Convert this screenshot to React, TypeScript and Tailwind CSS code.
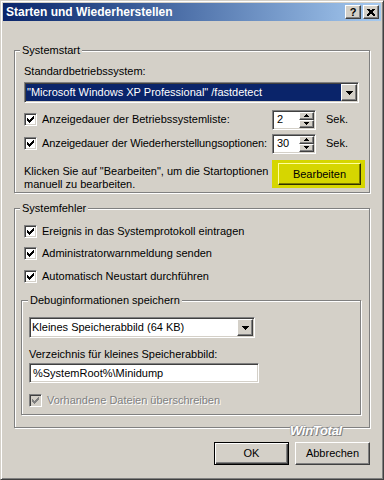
import type { ReactNode } from 'react'

const sunken =
  'border border-t-[#808080] border-l-[#808080] border-b-white border-r-white shadow-[inset_1px_1px_0_#404040,inset_-1px_-1px_0_#d4d0c8]'
const raised =
  'border border-t-white border-l-white border-b-[#404040] border-r-[#404040] shadow-[inset_-1px_-1px_0_#808080] bg-[#d4d0c8]'
const etched =
  'border border-[#808080] shadow-[inset_1px_1px_0_#fff,1px_1px_0_#fff]'

const Check = ({ color }: { color: string }) => (
  <svg width="7" height="7" viewBox="0 0 7 7" shapeRendering="crispEdges" fill={color}>
    <rect x="6" y="0" width="1" height="1" />
    <rect x="5" y="1" width="2" height="1" />
    <rect x="0" y="2" width="1" height="1" />
    <rect x="4" y="2" width="3" height="1" />
    <rect x="0" y="3" width="2" height="1" />
    <rect x="3" y="3" width="3" height="1" />
    <rect x="0" y="4" width="5" height="1" />
    <rect x="1" y="5" width="3" height="1" />
    <rect x="2" y="6" width="1" height="1" />
  </svg>
)

const CheckBox = ({ disabled }: { disabled?: boolean }) => (
  <div
    className={`flex h-[13px] w-[13px] shrink-0 items-center justify-center ${sunken} ${
      disabled ? 'bg-[#d4d0c8]' : 'bg-white'
    }`}
  >
    <Check color={disabled ? '#808080' : '#000'} />
  </div>
)

const ArrowDown = () => (
  <svg width="7" height="4" viewBox="0 0 7 4" shapeRendering="crispEdges">
    <polygon points="0,0 7,0 3.5,4" fill="#000" />
  </svg>
)

const Tiny = ({ up }: { up?: boolean }) => (
  <svg width="5" height="3" viewBox="0 0 5 3" shapeRendering="crispEdges">
    <polygon points={up ? '2.5,0 5,3 0,3' : '0,0 5,0 2.5,3'} fill="#000" />
  </svg>
)

const Select = ({ value, selected, className }: { value: string; selected?: boolean; className: string }) => (
  <div className={`flex h-[21px] bg-white p-[1px] ${sunken} ${className}`}>
    <div
      className={`flex flex-1 items-center pl-[1px] whitespace-nowrap ${
        selected ? 'bg-[#0a246a] text-white' : 'text-black'
      }`}
    >
      {value}
    </div>
    <div className={`flex w-[16px] items-center justify-center ${raised}`}>
      <ArrowDown />
    </div>
  </div>
)

const Spin = ({ value }: { value: string }) => (
  <div className={`flex h-[20px] w-[44px] bg-white p-[1px] ${sunken}`}>
    <div className="flex flex-1 items-center pl-[3px]">{value}</div>
    <div className="flex w-[15px] flex-col">
      <div className={`flex flex-1 items-center justify-center ${raised}`}>
        <Tiny up />
      </div>
      <div className={`flex flex-1 items-center justify-center ${raised}`}>
        <Tiny />
      </div>
    </div>
  </div>
)

const Row = ({ children, className = '' }: { children: ReactNode; className?: string }) => (
  <div className={`flex h-[16px] items-center gap-[5px] ${className}`}>
    <CheckBox />
    <span>{children}</span>
  </div>
)

export default function App() {
  return (
    <div className="relative h-[480px] w-[384px] overflow-hidden border border-t-[#d4d0c8] border-l-[#d4d0c8] border-b-[#404040] border-r-[#404040] bg-[#d4d0c8] p-[2px] font-['Liberation_Sans',Arial,sans-serif] text-[11px] leading-[13px] text-black shadow-[inset_1px_1px_0_#fff,inset_-1px_-1px_0_#808080]">
      {/* title bar */}
      <div className="flex h-[18px] items-center bg-gradient-to-r from-[#0a246a] to-[#a6caf0] pl-[3px] pr-[2px]">
        <span className="flex-1 text-[12px] font-bold text-white">Starten und Wiederherstellen</span>
        <div className={`flex h-[14px] w-[16px] items-center justify-center text-[11px] leading-none font-bold ${raised}`}>
          ?
        </div>
        <div className={`ml-[2px] flex h-[14px] w-[16px] items-center justify-center ${raised}`}>
          <svg width="8" height="7" viewBox="0 0 8 7" shapeRendering="crispEdges">
            <path d="M0.5 0 L7.5 7 M1.5 0 L8.5 7 M7.5 0 L0.5 7 M6.5 0 L-0.5 7" stroke="#000" strokeWidth="1" />
          </svg>
        </div>
      </div>

      <div className="flex flex-col px-[11px]">
        {/* Systemstart */}
        <fieldset className={`mt-[23px] px-[9px] pr-[10px] pb-[1px] ${etched}`}>
          <legend className="ml-[-4px] bg-[#d4d0c8] px-[2px]">Systemstart</legend>
          <div className="mt-[8px]">Standardbetriebssystem:</div>
          <Select className="mt-[4px]" selected value={'"Microsoft Windows XP Professional" /fastdetect'} />

          <div className="mt-[6px] flex h-[21px] items-center">
            <CheckBox />
            <span className="ml-[5px] w-[230px]">Anzeigedauer der Betriebssystemliste:</span>
            <Spin value="2" />
            <span className="ml-[10px]">Sek.</span>
          </div>
          <div className="mt-[3px] flex h-[21px] items-center">
            <CheckBox />
            <span className="ml-[5px] w-[230px] tracking-[-0.1px]">Anzeigedauer der Wiederherstellungsoptionen:</span>
            <Spin value="30" />
            <span className="ml-[10px]">Sek.</span>
          </div>

          <div className="mt-[6px] flex items-start justify-between">
            <p className="mt-[5px]">
              Klicken Sie auf &quot;Bearbeiten&quot;, um die Startoptionen
              <br />
              manuell zu bearbeiten.
            </p>
            <div className="mr-[-6px] flex h-[28px] w-[93px] items-center bg-[#d6d600] pl-[6px]">
              <div className="flex h-[22px] w-[83px] items-center justify-center border border-t-[#ffff9a] border-l-[#ffff9a] border-b-[#303000] border-r-[#303000] bg-[#d6d600] shadow-[inset_-1px_-1px_0_#7a7a00]">
                Bearbeiten
              </div>
            </div>
          </div>
        </fieldset>

        {/* Systemfehler */}
        <fieldset className={`mt-[9px] pl-[9px] pr-[8px] pb-[12px] ${etched}`}>
          <legend className="ml-[-4px] bg-[#d4d0c8] px-[2px]">Systemfehler</legend>
          <Row className="mt-[8px]">Ereignis in das Systemprotokoll eintragen</Row>
          <Row className="mt-[6px]">Administratorwarnmeldung senden</Row>
          <Row className="mt-[7px]">Automatisch Neustart durchführen</Row>

          <fieldset className={`mt-[10px] ml-[-3px] px-[7px] pb-[6px] ${etched}`}>
            <legend className="ml-[-1px] bg-[#d4d0c8] px-[2px]">Debuginformationen speichern</legend>
            <Select className="mt-[10px] w-[226px]" value="Kleines Speicherabbild (64 KB)" />
            <div className="mt-[10px]">Verzeichnis für kleines Speicherabbild:</div>
            <div className={`mt-[2px] flex h-[20px] w-[230px] items-center bg-white pl-[3px] ${sunken}`}>
              %SystemRoot%\Minidump
            </div>
            <div className="mt-[9px] flex h-[16px] items-center gap-[5px]">
              <CheckBox disabled />
              <span className="text-[#808080] [text-shadow:1px_1px_0_#fff]">Vorhandene Dateien überschreiben</span>
            </div>
          </fieldset>
        </fieldset>

        {/* buttons */}
        <div className="mt-[14px] flex justify-end gap-[6px]">
          <div className="flex h-[23px] w-[75px] items-center justify-center border border-black bg-[#d4d0c8] shadow-[inset_1px_1px_0_#fff,inset_-1px_-1px_0_#404040,inset_-2px_-2px_0_#808080]">
            OK
          </div>
          <div className={`flex h-[23px] w-[75px] items-center justify-center ${raised}`}>Abbrechen</div>
        </div>
      </div>

      {/* watermark */}
      <div className="absolute top-[423px] left-[289px] text-[13px] leading-[14px] font-bold italic tracking-[-0.3px] text-white [text-shadow:1px_1px_0_#808080,-1px_0_0_#a0a0a0,0_-1px_0_#b0b0b0]">
        WinTotal
      </div>
    </div>
  )
}
